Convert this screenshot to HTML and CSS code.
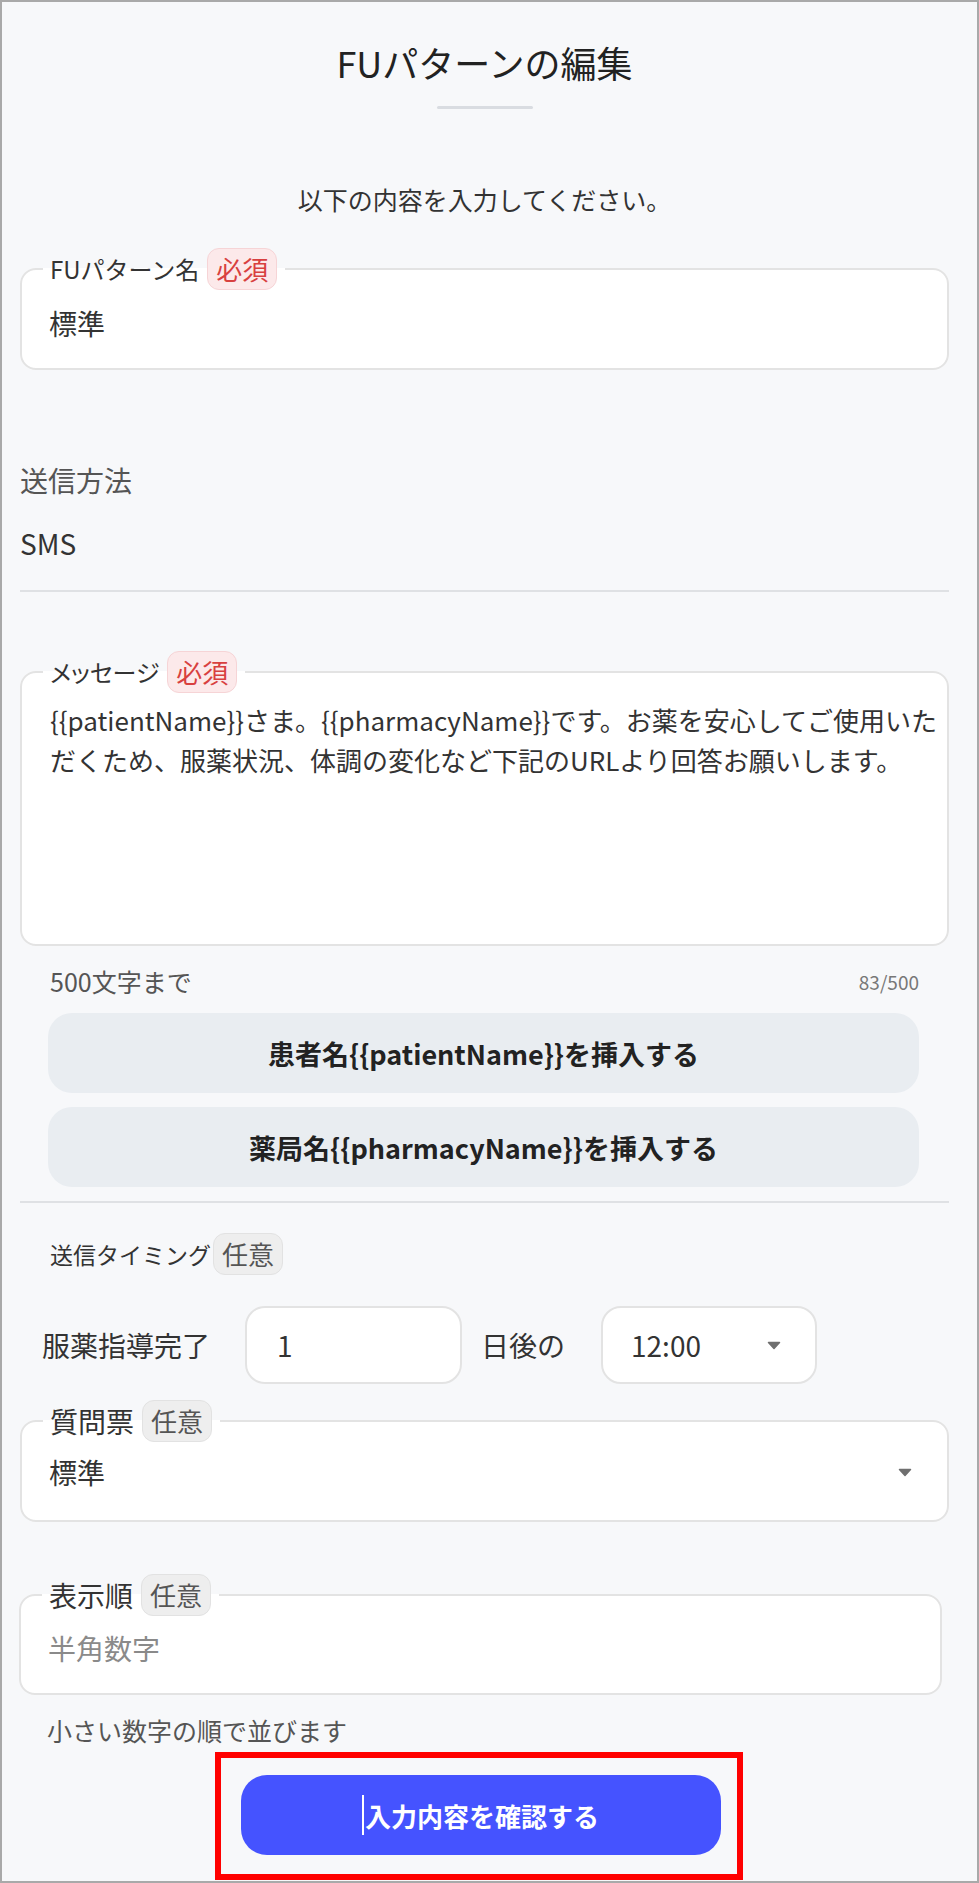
FILE: index.html
```html
<!doctype html>
<html lang="ja">
<head>
  <meta charset="utf-8">
  <title>FUパターンの編集</title>
  <link rel="stylesheet" href="styles.css">
</head>
<body>
  <div class="frame">

    <header class="head">
      <h1 class="title">FUパターンの編集</h1>
      <div class="title-bar"></div>
      <p class="lead">以下の内容を入力してください。</p>
    </header>

    <fieldset class="field field-name">
      <legend class="legend"><span>FUパターン名</span><span class="badge req">必須</span></legend>
      <div class="value">標準</div>
    </fieldset>

    <div class="static">
      <div class="static-label">送信方法</div>
      <div class="static-value">SMS</div>
    </div>
    <hr class="rule rule-sms">

    <fieldset class="field field-msg">
      <legend class="legend legend-kana"><span>メッセージ</span><span class="badge req">必須</span></legend>
      <div class="message">{{patientName}}さま。{{pharmacyName}}です。お薬を安心してご使用いただくため、服薬状況、体調の変化など下記のURLより回答お願いします。</div>
    </fieldset>

    <div class="helper">
      <div class="helper-row">
        <span>500文字まで</span>
        <span class="count">83/500</span>
      </div>
      <button class="insert insert-first">患者名{{patientName}}を挿入する</button>
      <button class="insert">薬局名{{pharmacyName}}を挿入する</button>
    </div>
    <hr class="rule rule-insert">

    <div class="timing">
      <div class="timing-label"><span>送信タイミング</span><span class="badge opt">任意</span></div>
      <div class="timing-row">
        <span class="timing-text">服薬指導完了</span>
        <div class="box box-days">1</div>
        <span class="timing-text timing-after">日後の</span>
        <div class="box box-time">
          <span>12:00</span>
          <svg class="arrow" width="14" height="9" viewBox="0 0 14 9"><path d="M1.5 1.5h11l-5.5 6z" fill="#6f6f6f" stroke="#6f6f6f" stroke-width="1.5" stroke-linejoin="round"/></svg>
        </div>
      </div>
    </div>

    <fieldset class="field field-q">
      <legend class="legend legend-lg"><span>質問票</span><span class="badge opt">任意</span></legend>
      <div class="value select">
        <span>標準</span>
        <svg class="arrow" width="14" height="9" viewBox="0 0 14 9"><path d="M1.5 1.5h11l-5.5 6z" fill="#6f6f6f" stroke="#6f6f6f" stroke-width="1.5" stroke-linejoin="round"/></svg>
      </div>
    </fieldset>

    <fieldset class="field field-order">
      <legend class="legend legend-lg"><span>表示順</span><span class="badge opt">任意</span></legend>
      <div class="value placeholder">半角数字</div>
    </fieldset>
    <p class="hint">小さい数字の順で並びます</p>

    <div class="actions">
      <div class="mark">
        <button class="submit"><span class="cursor"></span>入力内容を確認する</button>
      </div>
    </div>

  </div>
</body>
</html>
```

FILE: styles.css
```css
body {
  margin: 0;
  font-family: "Noto Sans CJK JP", "Noto Sans", sans-serif;
  color: #333333;
  background-color: #ffffff;
}

.frame {
  box-sizing: border-box;
  width: 979px;
  height: 1883px;
  overflow: hidden;
  border: 2px solid #a9a9a9;
  padding: 34px 28px 0 18px;
  background-color: #f7f8fa;
}

/* heading */
.head {
  text-align: center;
}
.title {
  margin: 0;
  font-size: 36px;
  line-height: 52px;
  font-weight: 400;
  color: #222222;
}
.title-bar {
  width: 96px;
  height: 3px;
  margin: 18px auto 0;
  border-radius: 2px;
  background-color: #d9dce1;
}
.lead {
  margin: 72px 0 0;
  font-size: 25px;
  line-height: 36px;
}

/* outlined fields */
.field {
  min-width: 0;
  margin: 31px 0 0;
  padding: 0 14px 0 21px;
  border: 2px solid #e3e3e3;
  border-radius: 16px;
  background-color: #ffffff;
}
.legend {
  display: flex;
  align-items: center;
  height: 42px;
  padding: 0 8px 0 7px;
  font-size: 24px;
  line-height: 42px;
  color: #333333;
}
.legend-kana span:first-child {
  font-feature-settings: "palt";
}
.legend-lg {
  font-size: 28px;
}
.badge {
  margin-left: 8px;
  padding: 0 8px;
  border: 1px solid;
  border-radius: 12px;
  font-size: 26px;
  line-height: 40px;
}
.req {
  background-color: #fce9ea;
  border-color: #f6d4d6;
  color: #d8403f;
}
.opt {
  background-color: #eeeeee;
  border-color: #e2e2e2;
  color: #555555;
}
.value {
  padding: 13px 0 25px 6px;
  font-size: 28px;
  line-height: 40px;
  color: #333333;
}

/* send method */
.static {
  margin-top: 92px;
  font-size: 28px;
  line-height: 36px;
}
.static-label {
  color: #555555;
}
.static-value {
  margin-top: 27px;
}
.rule {
  height: 2px;
  margin: 29px 0 0;
  border: 0;
  background-color: #dfe1e4;
}

/* message */
.field-msg {
  margin-top: 59px;
  padding-right: 0;
}
.message {
  box-sizing: border-box;
  height: 251px;
  padding: 7px 6px 0 7px;
  font-size: 26px;
  line-height: 40px;
  color: #333333;
}
.helper {
  margin: 18px 30px 0 28px;
}
.helper-row {
  display: flex;
  justify-content: space-between;
  align-items: center;
  height: 34px;
  padding-left: 2px;
  font-size: 25px;
  color: #555555;
}
.count {
  font-size: 19px;
  color: #777777;
}
.insert {
  display: block;
  width: 100%;
  height: 80px;
  margin-top: 14px;
  border: none;
  border-radius: 24px;
  background-color: #e9edf1;
  font-family: inherit;
  font-size: 27px;
  font-weight: 700;
  color: #222222;
}
.insert-first {
  margin-top: 15px;
}
.rule-insert {
  margin-top: 14px;
}

/* timing */
.timing {
  margin-top: 30px;
}
.timing-label {
  display: flex;
  align-items: center;
  height: 42px;
  padding-left: 30px;
  font-size: 23px;
}
.timing-label .badge {
  margin-left: 2px;
}
.timing-row {
  display: flex;
  align-items: center;
  height: 78px;
  margin-top: 31px;
  padding-left: 22px;
}
.timing-text {
  font-size: 28px;
}
.timing-after {
  margin-left: 19px;
}
.box {
  box-sizing: border-box;
  display: flex;
  align-items: center;
  height: 78px;
  border: 2px solid #e3e3e3;
  border-radius: 20px;
  background-color: #ffffff;
  font-size: 28px;
}
.box-days {
  width: 217px;
  margin-left: 35px;
  padding-left: 30px;
}
.box-time {
  justify-content: space-between;
  width: 216px;
  margin-left: 36px;
  padding: 0 34px 0 28px;
}
.arrow {
  display: block;
}

/* questionnaire / order */
.field-q {
  margin-top: 16px;
}
.select {
  display: flex;
  justify-content: space-between;
  align-items: center;
  padding: 10px 21px 28px 6px;
}
.field-order {
  margin: 52px 7px 0 -1px;
}
.placeholder {
  padding: 12px 0 25px 6px;
  color: #8a8a8a;
}
.hint {
  margin: 17px 0 0;
  padding-left: 27px;
  font-size: 25px;
  line-height: 36px;
  color: #555555;
}

/* submit */
.actions {
  display: flex;
  justify-content: center;
  margin-top: 4px;
  padding-right: 12px;
}
.mark {
  padding: 17px 16px 19px 20px;
  border: 6px solid #ff0000;
}
.submit {
  display: flex;
  justify-content: center;
  align-items: center;
  width: 480px;
  height: 80px;
  border: none;
  border-radius: 26px;
  background-color: #4553ff;
  font-family: inherit;
  font-size: 26px;
  font-weight: 700;
  color: #ffffff;
}
.cursor {
  width: 2px;
  height: 40px;
  margin-right: 1px;
  background-color: #ffffff;
}
```
